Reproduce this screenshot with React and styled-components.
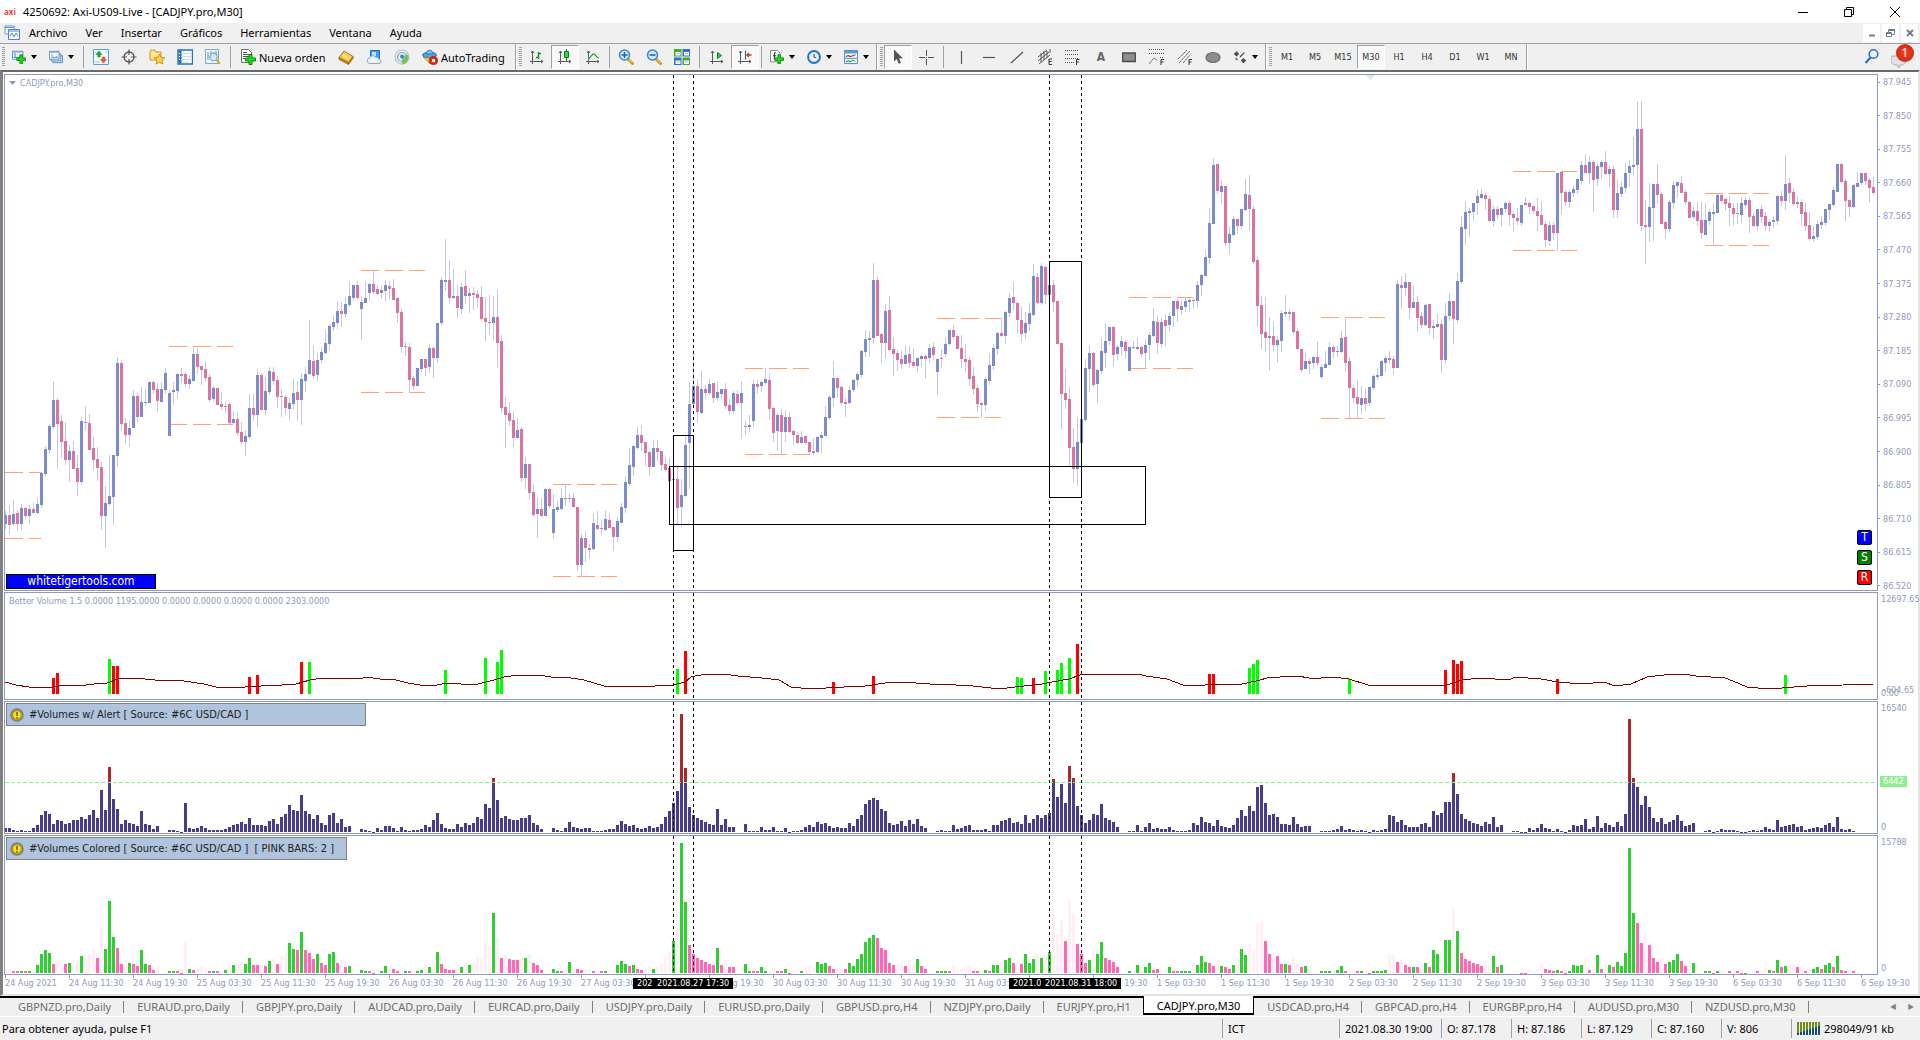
import React from "react";
import styled, { createGlobalStyle, css } from "styled-components";

const UI = `"Noto Sans", "Open Sans", sans-serif`;
const SMALL = `"DejaVu Sans Condensed", "DejaVu Sans", sans-serif`;
const INK = "#8f9abd";

const GlobalStyle = createGlobalStyle`
  * { box-sizing: border-box; }
  body { margin: 0; background: #f0f0f0; font-family: ${UI}; font-size: 11px; color: #000; }
  button { font: inherit; color: inherit; background: none; border: 0; padding: 0; margin: 0; }
  svg { display: block; }
`;

/* ---------- market data ---------- */

// One candle per entry: direction, high, body top, body bottom, low (three steps per pixel).
const SEGMENTS = [
  {
    top: 125,
    data: `u 933 945 972 987,d 918 945 975 1002,u 900 942 972 975,d 930 939 972 993,u 912 924 972 990,d 921 924 948 957,u 915 927 948 972,d 909 927 939 942,u 894 912 939 942,u 816 819 915 924,u 738 747 822 828,u 672 678 750 762,u 543 600 681 687,d 594 600 672 807,d 645 663 726 774,d 666 723 780 795,u 735 753 780 846,d 723 753 807 807,d 765 804 846 888,u 651 663 846 852,d 618 666 669 690,d 642 669 750 750,d 708 744 780 810,d 741 777 804 843,d 786 801 948 990,u 858 909 948 1044,u 765 888 912 918,u 765 765 891 975,u 471 489 768 801,d 480 489 672 690,d 654 669 705 732,u 660 684 705 741,u 570 588 684 684,d 579 588 651 666,u 561 606 651 651,u 567 606 609 618,u 543 546 609 609,d 543 546 570 582,d 549 567 603 636,u 546 567 606 606,u 504 519 570 582,u 570 579 708 708,u 546 570 576 615,u 519 522 573 594,d 504 522 528 549,d 516 522 552 561,u 525 537 552 567,u 438 462 543 543,d 444 462 501 522,d 498 498 510 555,d 483 507 534 543,d 522 531 600 606,u 558 564 597 603,d 564 564 615 615,d 576 612 621 630,d 606 618 621 639,d 609 612 669 675,u 633 657 669 672,d 636 657 699 708,d 666 696 726 735,u 690 708 726 768,u 582 624 711 717,d 579 624 645 663,u 507 525 645 681,d 519 525 630 630,u 531 573 630 645,u 501 513 576 585,d 501 516 543 555,d 528 540 591 624,d 567 588 591 651,d 585 591 624 642,u 594 609 627 663,u 537 579 612 627,d 543 576 600 663,u 519 537 600 675,u 501 522 543 576,u 360 480 522 525,d 438 483 528 534,u 459 480 525 543,u 441 456 480 489,u 390 429 459 462,u 372 378 432 450,u 348 366 381 393,u 306 333 369 387,d 306 333 342 381,u 291 312 342 354,u 243 288 315 321,u 255 255 294 303,d 243 255 294 297,u 288 306 327 420,u 243 294 309 309,u 249 252 279 303,d 210 252 276 282,d 255 267 282 285,u 258 270 279 297,u 240 255 273 303,d 243 258 267 297,d 237 264 300 300,d 291 294 339 369,d 327 336 441 459,d 426 438 441 468,d 429 441 540 579,d 528 534 558 570,u 504 504 558 558,u 477 477 507 516,d 477 477 504 528,u 432 444 501 519,d 438 444 474 534,u 369 369 474 489,u 231 240 369 375,u 117 240 246 273,d 180 240 294 309,u 204 288 294 297,d 258 288 324 354,u 249 261 327 342,d 210 258 288 312,u 264 279 288 339,d 261 279 285 330,d 270 282 294 324,d 258 291 357 363,d 291 354 366 423,d 285 366 369 402,u 288 351 369 420,d 270 351 429 504,d 405 423 624 639,d 591 621 645 744,d 606 639 663 678,d 633 660 714 741,u 654 690 714 717,d 681 687 834 846,u 771 792 834 867,d 792 792 879 900,d 852 876 945 948,u 891 927 942 1014,d 894 927 948 951,u 864 867 948 948,d 864 867 918 924,u 882 927 999 1017,u 900 921 930 936,u 864 894 927 930,d 852 894 897 918,d 882 894 897 906,d 879 894 921 921,d 921 921 1095 1113,u 1002 1014 1095 1131,d 993 1014 1044 1086,d 1032 1044 1050 1077,u 942 969 1047 1050,d 933 975 987 990,d 960 984 987 1002,u 930 957 990 993,d 942 960 984 987,d 981 981 1011 1053,u 951 963 1011 1026,u 909 921 969 969,u 828 846 924 939,u 744 795 852 858,u 735 738 801 828,u 681 705 744 750`,
  },
  {
    top: 155,
    data: `d 585 615 639 663,d 636 636 669 708,d 663 666 711 738,u 630 654 711 711,d 630 654 666 693,d 663 663 705 723,d 681 702 720 726,d 684 714 753 753,u 744 747 750 750,d 711 747 834 882,u 747 795 831 891,u 612 645 798 801,u 456 522 639 777,u 360 468 522 525,d 447 468 546 576,u 423 477 549 552,d 465 477 489 507,u 447 462 489 495,d 459 459 504 519,u 456 486 504 513,u 477 477 492 507,d 459 477 528 537,d 507 525 543 555,u 483 489 543 552,d 480 492 519 525,u 453 489 519 627,d 573 588 591 615,u 555 585 591 606,u 450 462 573 591,d 450 462 471 492,u 450 456 468 486,u 414 447 459 465,d 429 450 537 570,d 531 534 609 636,u 549 555 603 663,d 537 555 606 675,u 540 561 606 636,d 546 561 606 609,d 600 603 615 645,d 606 615 639 642,u 603 621 639 642,d 618 618 639 645,d 636 636 666 675,d 624 663 669 675,u 618 621 666 669,u 606 615 624 669,u 528 561 618 618,u 495 501 564 570,u 393 444 504 531,d 444 444 474 504,d 468 471 519 528,d 504 516 522 561,u 468 480 519 522,u 447 450 480 486,u 429 432 450 471,u 360 363 435 444,u 300 327 366 381,u 303 324 330 381,u 99 150 324 342,d 138 150 318 318,d 309 312 339 399,u 222 243 339 384,d 198 240 360 363,d 321 357 372 438,d 360 369 390 423,d 363 387 402 417,u 345 375 402 402,d 348 372 399 414,d 354 396 408 414,u 381 384 408 426,u 372 378 387 411,d 372 378 387 447,u 342 354 384 399,d 336 351 375 390,u 384 387 426 495,d 357 384 387 414,u 324 342 372 381,u 300 300 342 348,d 285 300 321 327,d 315 318 357 357,d 315 354 387 414,d 342 387 396 426,d 381 390 447 468,d 411 438 477 495,d 465 474 522 546,d 516 519 525 564,u 441 447 525 543,u 369 405 453 465,u 342 354 408 420,u 306 309 357 375,d 264 309 318 321,u 243 246 318 342,u 189 204 249 261,d 156 201 219 240,d 216 219 270 309,d 231 270 312 336,u 246 279 309 327,u 219 249 282 303,u 102 138 255 258,d 129 141 219 222,u 99 108 219 225,d 108 111 195 222,u 165 165 195 195,d 150 165 216 246,d 213 213 342 342,d 339 339 492 597,d 417 489 510 537,d 471 507 654 711,d 594 651 717 759,u 561 636 717 768,u 567 567 639 639,u 387 414 570 576,u 348 369 417 486,d 366 369 465 471,u 417 420 462 519,u 324 363 423 432,u 279 333 369 414,u 291 291 333 345,d 288 291 375 408,u 345 351 372 390,u 318 333 351 378,d 330 336 363 387,u 351 351 423 423,d 333 351 354 357,u 324 351 357 360,d 348 351 372 381,u 327 345 369 417,u 306 315 345 390,u 234 273 318 321,d 255 276 339 372,u 264 276 342 354,d 252 270 288 348,u 246 258 285 306,u 213 213 258 291,d 207 213 237 276,u 210 228 240 255,u 201 213 231 246,u 201 210 216 246,d 204 210 213 237,u 153 165 213 234,u 132 135 165 198,u 60 81 138 138`,
  },
  {
    top: 15,
    data: `u 354 399 504 522,u 204 225 402 402,d 222 222 303 312,u 270 288 306 342,d 288 288 459 468,u 411 432 459 492,u 378 387 435 438,d 387 387 408 429,u 357 357 408 417,u 267 312 360 363,d 255 315 357 420,d 348 357 516 522,d 501 510 648 708,d 618 645 732 777,d 621 726 744 786,u 681 738 744 843,d 696 738 765 783,u 738 750 765 819,u 660 669 753 786,u 615 666 672 681,d 657 666 672 693,d 666 666 726 735,d 717 723 777 783,d 777 777 840 846,u 786 813 837 837,d 804 813 822 852,u 798 801 819 837,d 753 801 819 828,u 822 831 861 867,u 783 822 834 834,u 756 771 825 825,d 765 771 786 804,u 768 783 786 801,u 723 744 786 789,d 681 741 819 846,d 801 813 894 984,d 885 894 924 939,d 870 921 942 984,u 888 924 945 972,d 894 924 942 963,u 891 891 939 948,u 852 858 894 900,u 834 855 861 870,u 810 813 858 858,u 795 804 819 846,d 783 804 810 822,d 798 807 834 855,u 570 582 834 834,d 558 585 594 657,u 549 576 594 618,d 576 576 654 684,u 588 636 654 654,d 618 636 684 726,d 666 678 705 714,u 642 645 705 708,d 642 642 714 732,u 690 708 714 747,u 672 702 711 714,d 687 702 810 849,u 639 678 810 822,u 609 633 678 693,d 633 633 687 762,u 549 573 690 699,u 378 411 576 582,u 336 366 417 465,u 354 363 369 441,u 339 339 366 393,u 297 318 339 375,u 297 312 324 327,d 306 315 327 360,d 318 327 393 396,u 348 357 393 411,d 348 357 375 387,u 354 354 375 411,u 333 339 357 369,d 330 339 375 408,d 366 372 384 426,d 354 384 393 405,u 345 345 399 408,u 321 339 345 345,d 333 339 351 372,d 348 348 363 372,d 324 363 378 423,d 336 375 405 405,d 393 402 450 471,u 396 405 453 468,d 396 405 429 450,u 249 249 429 483,d 246 246 309 372,d 300 306 336 348,u 300 306 336 354,u 288 297 309 321,u 264 267 300 312,u 213 225 273 285,d 192 225 249 249,u 198 216 249 282,d 210 216 270 366,u 219 228 267 288,u 210 216 231 267,d 183 216 252 255,u 228 237 252 291,d 228 237 360 384,u 270 309 360 384,u 276 291 312 321,u 219 249 294 309,u 210 228 249 291,u 141 225 231 255,u 33 117 225 402,d 33 117 408 423,d 330 405 411 522,u 279 351 411 456,u 282 282 354 453,d 222 282 315 342,d 306 312 402 402,d 393 396 417 444,u 330 336 417 426,u 273 285 339 357,u 276 276 288 324,d 258 279 309 309,d 300 306 336 345,d 333 336 384 384,u 351 363 381 387,d 336 363 393 408,d 333 390 429 447,u 339 390 435 435,u 357 366 393 405,u 339 366 372 465,u 312 315 369 369,d 309 315 333 339,d 324 327 342 363,d 318 339 354 408,d 339 354 372 405,d 339 369 372 402,u 321 339 375 399,u 321 330 345 357,d 321 330 381 429,d 369 378 408 411,u 357 357 408 423,d 345 357 381 399,d 366 378 408 423,u 387 396 408 426,u 378 390 396 414,u 315 318 393 405,d 303 318 333 348,u 195 282 333 360,d 264 279 309 339,d 294 306 342 348,u 318 336 342 354,d 327 336 372 405,d 339 366 408 423,d 366 405 447 453,u 408 438 447 456,u 390 402 441 450,u 378 396 405 417,u 357 357 399 408,u 342 342 360 390,u 291 300 345 351,u 222 222 306 306,d 219 222 276 279,d 267 273 333 393,d 330 330 351 381,u 282 285 351 354,u 246 279 291 291,u 249 249 279 285,d 249 249 273 285,d 264 270 294 339,d 261 291 309 315`,
  },
];

const CANDLES = SEGMENTS.flatMap(({ top, data }) =>
  data.split(",").map((row) => {
    const [dir, ...v] = row.split(" ");
    const [high, open, close, low] = v.map((n) => top + Math.round(Number(n) / 3));
    return { dir, high, open, close, low };
  })
);

// Volume bars: size followed by tone (G rising, P falling, L neutral). Zero means no bar.
const VOLUMES = `4L 4L 2P 1P 2G 1P 1G 4L 7G 17G 21G 18G 8P 12L 11L 8P 9G 12L 12L 15G 13L 17L 22L 14P 42L 22G 65G 33G 23P 8P 12L 9G 8P 6P 21G 8G 7P 3P 6L 0 0 2G 2G 1P -1P 29L 4G 3P 4L 6L 4L 2P 2G 2P 2L 3G 5L 7G 8L 10L 8G 14G 7P 7P 7L 6P 11G 13L 8P 15L 18L 27G 22G 21P 37G 21P 18P 13P 17G 9P 7P 17G 19G 9P 13L 5P 6G 0 0 3G 2G 1P -1P 4L 2G 6G 6L 4P 1P 5L 2G 1P 2L 2G 3G 7L 5G 12L 19G 8P 4P 3P 3P 8L 5G 9L 7G 9L 15L 13L 28L 24L 54G 32L 14P 16L 13P 12P 12P 14L 14G 17L 9P 7P 3P 0 0 4G 2G 1P 4L 10G 5L 4P 3P 4L 4L 1P 1L 1P 2G 3L 3L 7G 11G 8G 6P 7G 4P
3P 4L 6L 4G 5L 8L 15L 21L 29G 41L 118G 64G 25P 17P 14P 12P 10P 8P 7P 23G 7P 13L 5P 5P 0 0 8G 1G 1P 1P 5G 2G 2L 5L 1P 1P 4G -1P 1L 1L 2G 5L 7L 5L 10G 8G 9G 6P 4P 5L 4L 4P 9G 6G 13G 17G 28G 32G 34G 32P 23P 21P 9P 7P 8L 11L 6P 12L 8L 13G 6P 4P 0 0 1G 2G 1G 1P 7L 3L 4L 6L 7L 2P 2P 2L 3G 1P 7G 7G 11L 12G 14G 9P 10L 8P 17G 9G 13G 17L 14G 17L 19G 53L 35L 48L 29P 66L 54L 26P 17P 9P 12G 18L 17G 28G 14P 12P 10P 5P 0 0 1G 1L 7G 1L 5G 9G 3P 4P 3L 3L 5G 2P 1P 1G 1G 2G 9L 7G 15G 10G 9P 6P 12L 6G 5P 4P 7G 14L 22G 16G 26L 21L 45L 47L 29P 17P 18L 15P
8P 8G 7P 15L 8L 5P 6G 6L 0 0 1G 1G 1G 2L 3G 6G 2P 3L 2L 1P 2G 1L -1P 2G 1G 2G 3G 17L 16L 10P 12L 7P 5P 5G 5P 8L 9G 5P 21G 17G 19L 30G 30G 59L 38G 18P 13P 11P 9P 8P 6P 10L 8L 15G 5P 7G 0 0 1L 1L -1P -1P 4L 2L 4L 8L 4P 3P 1P 3G 1P -1P 2G 7G 6G 7G 13L 3P 5L 16G 4P 9L 7G 5P 10G 6G 18G 113G 54G 45P 27P 36L 25P 14P 10P 14L 8P 10G 12G 17G 11P 6P 7L 9G 0 0 1G 2G -1P 1G 3L 2L 2P 2L 1P -1P -1G 1L 2L 1P 2L 5L 3G 2P 12G 5P 6G 7L 8L 5P 6L 2P 3L 4G 5G 4P 7G 9G 5P 15G 3P 2P 3L 1P`
  .split(/\s+/)
  .map((v) => ({ size: parseInt(v, 10), tone: v.slice(-1) }));

const TONES = { G: "#32cd32", P: "#ff69b4", L: "#fff0f5" };

// Highlighted bars of the first indicator: index, colour, height.
const CLIMAX = `12r16 13r21 26g35 27r28 28r28 61r17 63r19 74r32 76g32 110g24 120g36 123g32 124g44 168g25 170r43 207r12 217r18 253g17 254g16 257r16 260g23 263g24 264g31 266g36 268r50 301r20 302r20 311g26 312g30 313g34 336g15 360r24 362r34 363r30 364r33 388r15 445g19`
  .split(" ")
  .map((v) => v.match(/(\d+)([rg])(\d+)/).slice(1));

const AVERAGE = `5,682 16,685 29,687 53,687 65,685 78,686 94,684 107,683 118,679 135,678 155,680 184,681 204,684 216,687 245,687 261,686 282,685 296,684 310,680 322,678 347,678 361,679 365,677 380,679 396,680 408,683 420,685 437,685 447,683 459,683 463,685 478,684 494,680 504,677 518,675 539,675 551,677 571,678 584,680 604,686 620,687 640,686 655,686 673,685 685,682 691,677 695,676 707,674 724,674 738,676 762,678 779,680 791,687 801,688 826,688 844,687 865,686 885,683 901,682 930,684 956,685 973,686 991,688 1007,688 1024,686 1042,684 1052,682 1069,679 1083,674 1120,674 1130,675 1138,674 1146,676 1167,679 1183,685 1205,685 1226,684 1242,684 1256,681 1271,677 1280,677 1298,676 1309,678 1321,678 1333,677 1349,679 1368,685 1386,686 1413,685 1421,686 1447,685 1462,680 1480,678 1509,680 1515,677 1541,679 1558,682 1582,684 1604,682 1615,686 1631,684 1647,677 1664,675 1684,674 1696,676 1725,678 1733,681 1747,687 1758,688 1782,688 1807,686 1843,685 1873,684`;

// Session ranges: first candle, high, low.
const SESSIONS = [
  [41, 346, 424], [89, 270, 392], [137, 484, 576], [185, 368, 454], [233, 318, 417],
  [281, 297, 368], [329, 317, 418], [377, 171, 250], [425, 193, 245],
];

const GUIDES = [167, 172, 261, 269];
const STEP = 4;

/* ---------- window chrome ---------- */

const Window = styled.div`
  display: flex;
  flex-direction: column;
  height: 100vh;
  overflow: hidden;
  background: #f0f0f0;
`;

const TitleBar = styled.header`
  display: flex;
  align-items: center;
  height: 23px;
  padding: 0 2px 0 4px;
  background: #fff;
`;
const Brand = styled.span`
  width: 19px;
  font: bold 8px/12px "Open Sans", sans-serif;
  color: #f0404c;
`;
const Title = styled.h1`
  flex: 1;
  margin: 0;
  font: 11px/16px ${UI};
`;
const WindowButton = styled.button`
  display: grid;
  place-items: center;
  width: 46px;
  height: 22px;
`;

const MenuBar = styled.nav`
  display: flex;
  align-items: center;
  height: 20px;
  padding-left: 4px;
  font-size: 11px;
`;
const MenuItems = styled.div`
  display: flex;
  flex: 1;
`;
const MenuButton = styled.button`
  padding: 0 9px;
  line-height: 18px;
`;
const MdiButton = styled.button`
  display: grid;
  place-items: center;
  width: 17px;
  height: 18px;
  margin-right: 2px;
  background: #fff;
  color: #6b7f94;
`;

const Toolbar = styled.div`
  display: flex;
  height: 27px;
  border-top: 1px solid #a0a0a0;
  background: #f0f0f0;
`;
const Group = styled.div`
  display: flex;
  align-items: center;
  padding-right: 1px;
  border-right: 1px solid #a0a0a0;
  box-shadow: 1px 0 #fff;
  margin-right: 1px;
`;
const Handle = styled.span`
  width: 3px;
  height: 20px;
  margin: 0 1px 0 2px;
  background: repeating-linear-gradient(#a0a0a0 0 1px, #f0f0f0 1px 2px);
`;
const Divider = styled.span`
  width: 1px;
  height: 22px;
  margin: 0 ${(p) => (p.$tight ? 2 : 3)}px;
  background: #a0a0a0;
`;
const ToolButton = styled.button`
  display: flex;
  align-items: center;
  justify-content: ${(p) => (p.$drop || p.$wide ? "flex-start" : "center")};
  gap: ${(p) => (p.$wide ? 3 : 5)}px;
  width: ${(p) => (p.$wide ? 98 : p.$drop ? 37 : 28)}px;
  height: 24px;
  padding: 0 ${(p) => (p.$drop || p.$wide ? 6 : 0)}px;
  white-space: nowrap;
  ${(p) =>
    p.$wide &&
    css`
      padding-right: 0;
    `}
  ${(p) =>
    p.$drop &&
    css`
      &::after {
        content: "";
        border: 3px solid transparent;
        border-top: 4px solid #000;
        border-bottom: 0;
      }
    `}
  ${(p) =>
    p.$small &&
    css`
      font: 9px/12px ${SMALL};
      color: #333;
    `}
  ${(p) =>
    p.$pressed &&
    css`
      background: #f9f9f9;
      border: 1px solid #fff;
      border-top-color: #a0a0a0;
      border-left-color: #a0a0a0;
    `}
`;
const Spacer = styled.span`
  flex: 1;
`;
const Alerts = styled.button`
  position: relative;
  display: flex;
  align-items: flex-end;
  width: 30px;
  height: 24px;
  padding-left: 5px;
  margin-right: 4px;
`;
const AlertCount = styled.span`
  position: absolute;
  top: 0;
  right: 2px;
  width: 18px;
  height: 18px;
  border-radius: 9px;
  background: radial-gradient(#f0452c, #c81e0a);
  color: #fff;
  font: 12px/17px ${UI};
  text-align: center;
`;

/* ---------- chart ---------- */

const ChartFrame = styled.main`
  display: flex;
  flex: 1;
  flex-direction: column;
  gap: 1px;
  min-height: 0;
  padding: 2px 0 0 1px;
  border-top: 2px solid #696969;
  border-left: 3px solid #808080;
  border-right: 2px solid #e3e3e3;
  border-bottom: 2px solid #e3e3e3;
  background: #fff;
  color: ${INK};
  font: 9px/12px ${SMALL};
`;
const Pane = styled.section`
  display: flex;
  flex: ${(p) => (p.$height ? `0 0 ${p.$height}px` : "1")};
  min-height: 0;
`;
const Plot = styled.div`
  position: relative;
  flex: 1;
  min-width: 0;
  overflow: hidden;
  border: 1px solid ${INK};
`;
const Canvas = styled.svg`
  width: 100%;
  height: 100%;
  shape-rendering: crispEdges;
`;
const Axis = styled.div`
  position: relative;
  display: flex;
  flex-direction: column;
  justify-content: space-between;
  width: 40px;
  padding: 1px 0 1px 3px;
  line-height: 12px;
  white-space: nowrap;
`;
const PriceAxis = styled(Axis)`
  padding: 3px 0 0 0;
  line-height: 10px;
`;
const Price = styled.span`
  display: flex;
  align-items: center;
  gap: 3px;
  &::before {
    content: "";
    width: 2px;
    height: 1px;
    background: ${INK};
  }
`;
const Overlap = styled.span`
  display: grid;
  span {
    grid-area: 1 / 1;
  }
  span + span {
    padding-left: 2px;
    margin-top: -3px;
  }
`;
const LevelTag = styled.span`
  position: absolute;
  top: 75px;
  left: 2px;
  width: 27px;
  padding-left: 3px;
  background: #90ee90;
  color: #fff;
  line-height: 11px;
`;
const Caption = styled.div`
  position: absolute;
  top: 2px;
  left: 4px;
  display: flex;
  align-items: center;
  gap: 4px;
`;
const Source = styled.div`
  position: absolute;
  top: 1px;
  left: 1px;
  display: flex;
  align-items: center;
  gap: 5px;
  width: ${(p) => p.$width}px;
  height: 23px;
  padding-left: 3px;
  border: 1px solid #808080;
  background: #b0c4de;
  color: #222;
  font: 11px/20px ${SMALL};
  white-space: pre;
`;
const Site = styled.a`
  position: absolute;
  left: 1px;
  bottom: 1px;
  width: 150px;
  border: 1px solid #000;
  background: #00f;
  color: #fff;
  font: 12px/13px ${SMALL};
  text-align: center;
  text-decoration: none;
`;
const Switches = styled.div`
  position: absolute;
  right: 5px;
  bottom: 5px;
  display: flex;
  flex-direction: column;
  gap: 5px;
`;
const Switch = styled.button`
  width: 15px;
  height: 15px;
  border: 1px solid #000;
  border-radius: 2px;
  background: ${(p) => p.$tone};
  color: #fff;
  font: 12px/13px ${SMALL};
`;
const TimeAxis = styled.div`
  position: relative;
  display: flex;
  flex: 0 0 19px;
  margin-top: -1px;
  padding-left: 1px;
  overflow: hidden;
`;
const Time = styled.time`
  flex: 0 0 64px;
  white-space: nowrap;
  line-height: 11px;
  &::before {
    content: "";
    display: block;
    width: 1px;
    height: 3px;
    background: ${INK};
  }
`;
const TimeTag = styled.time`
  position: absolute;
  top: 3px;
  left: ${(p) => p.$index * STEP - 39}px;
  width: ${(p) => (p.$next ? (p.$next - p.$index) * STEP : 80)}px;
  padding-left: 4px;
  background: #000;
  color: #fff;
  line-height: 11px;
  white-space: nowrap;
`;

/* ---------- bottom bars ---------- */

const Tabs = styled.nav`
  display: flex;
  flex: 0 0 21px;
  padding-left: 5px;
  border-top: 2px solid #000;
  border-bottom: 1px solid #fff;
  color: #6d6d6d;
`;
const Tab = styled.button`
  position: relative;
  height: 17px;
  padding: 0 13px;
  line-height: 16px;
  white-space: nowrap;
  &::after {
    content: "";
    position: absolute;
    right: 0;
    top: 3px;
    height: 12px;
    border-right: 1px solid #808080;
  }
  ${(p) =>
    p.$active &&
    css`
      height: 19px;
      margin: -2px 0 0 -1px;
      padding: 2px 13px 0;
      border: 1px solid #000;
      border-top: 0;
      border-bottom-width: 2px;
      background: #fff;
      color: #000;
      &::after {
        display: none;
      }
    `}
`;
const TabScroll = styled.button`
  width: 18px;
  color: #808080;
  font: 8px/16px ${SMALL};
`;
const StatusBar = styled.footer`
  display: flex;
  align-items: center;
  flex: 0 0 23px;
`;
const Cell = styled.span`
  display: flex;
  align-items: center;
  gap: 4px;
  flex: ${(p) => (p.$width ? `0 0 ${p.$width}px` : "1")};
  height: 19px;
  padding-left: ${(p) => (p.$width ? 5 : 2)}px;
  border-left: ${(p) => (p.$width ? "1px solid #a0a0a0" : "0")};
  white-space: nowrap;
`;

/* ---------- icons ---------- */

const Icon = ({ children, size = 16 }) => (
  <svg width={size} height={size} viewBox="0 0 16 16" fill="none" aria-hidden="true">
    {children}
  </svg>
);
const Plus = ({ x = 5, y = 5 }) => (
  <path
    transform={`translate(${x} ${y})`}
    d="M4 .5h3V4h3.500v3H7v3.500H4V7H.5V4H4z"
    fill="#1fd81f"
    stroke="#0a8a0a"
  />
);
const Axes = () => (
  <path d="M3.500 2v13M1 12.500h13M2 4l1.500-2L5 4M12 11l2 1.500-2 1.500" stroke="#5a5a5a" />
);
const Lens = ({ children }) => (
  <>
    <path d="M10 10l4.500 4.500" stroke="#c89b28" strokeWidth="3" strokeLinecap="round" />
    <path d="M10.500 10l4 4" stroke="#f6d65c" strokeWidth="1" />
    <circle cx="6.500" cy="6" r="5" fill="#cfe8fb" stroke="#3f87c9" strokeWidth="1.500" />
    {children}
  </>
);

const icons = {
  newChart: (
    <>
      <path d="M.5 1.500h12v9H.5z" fill="#eef6fd" stroke="#4d86b8" />
      <path d="M1 2.500h11" stroke="#7fb0dc" />
      <path d="M3.500 4v5M2 8.500h8M2.500 5l1-1 1 1" stroke="#4d86b8" />
      <Plus />
    </>
  ),
  profiles: (
    <>
      <path d="M4.500 6.500h11v8h-11z" fill="#d8eaf9" stroke="#4d86b8" />
      <path d="M2.500 4.500h11v8h-11z" fill="#e5f1fb" stroke="#4d86b8" />
      <path d="M.5 1.500h11v9H.5z" fill="#f4f9fe" stroke="#4d86b8" />
      <path d="M1 2.500h10M3.500 4v5M3 8.500h7M8 7l2 1.500" stroke="#6ca0cd" />
    </>
  ),
  market: (
    <>
      <path d="M.5.5h15v15H.5z" fill="#f5faff" stroke="#5b9bd5" />
      <path d="M2 3h2M2 13h5M12 3h2" stroke="#9ac3e6" />
      <path d="M6 2l3 3.500H7.200V8H4.800V5.500H3z" fill="#1fae2b" stroke="#0b7a18" strokeWidth=".5" />
      <path d="M10.500 14l3-3.500h-1.800V8H9.300v2.500H7.500z" fill="#f05a3c" stroke="#b32a12" strokeWidth=".5" />
    </>
  ),
  cross: (
    <>
      <circle cx="8" cy="8" r="5" stroke="#555" strokeWidth="1.300" />
      <path d="M8 .5V6M8 10v5.500M.5 8H6M10 8h5.500" stroke="#555" strokeWidth="1.200" />
    </>
  ),
  navigator: (
    <>
      <path d="M1 3l1-2h4l1 2h5v8H1z" fill="#fbe38a" stroke="#c79a24" />
      <path d="M2 5h9" stroke="#fff3bf" />
      <path d="M10.500 5l1.700 3.400 3.600.5-2.600 2.500.7 3.700-3.400-1.800-3.300 1.800.7-3.700L5.200 8.900l3.600-.5z" fill="#fdd335" stroke="#b9820f" strokeWidth=".8" />
    </>
  ),
  terminal: (
    <>
      <path d="M1 1h14.500v14H1z" fill="#f5faff" stroke="#2d6fb5" strokeWidth="1.400" />
      <path d="M1.500 1.500h3v13h-3z" fill="#2d6fb5" />
      <path d="M6 4.500h8M6 7.500h8M6 10.500h8M6 13h5" stroke="#c7daec" />
      <path d="M2 4.500h1M2 7.500h1M2 10.500h1" stroke="#fff" />
    </>
  ),
  tester: (
    <>
      <path d="M.5.5h13v14H.5z" fill="#eef5fb" stroke="#7ea9cf" />
      <path d="M3 3v8M6 2v7M9 3v5M11 2v5" stroke="#6c8fae" />
      <circle cx="8.500" cy="8" r="3.800" fill="#d4ebfb" fillOpacity=".8" stroke="#6a9cc4" />
      <path d="M11.500 11l3.500 3.800" stroke="#d8a62c" strokeWidth="2" />
    </>
  ),
  order: (
    <>
      <path d="M1.500.5h7l3 3v10h-10z" fill="#fff" stroke="#6b6b6b" />
      <path d="M3 3.500h4M3 5.500h6M3 7.500h6M3 9.500h3" stroke="#555" />
      <Plus />
    </>
  ),
  book: (
    <>
      <path d="M1 8.500L6 2l9 5.500-4.500 6z" fill="#f3cf5a" stroke="#a87a12" />
      <path d="M1 8.500v2l9.500 5v-2zM10.500 15.500l4.500-6v-2l-4.500 6z" fill="#c48f1e" stroke="#8c650d" strokeWidth=".7" />
      <path d="M5 6l5 3" stroke="#fff2ba" />
    </>
  ),
  cloud: (
    <>
      <path d="M4.500 1.500h9v8h-9z" fill="#3e9ff0" stroke="#1d6fc0" />
      <path d="M6 3h4v4H6z" fill="#bfe0ff" />
      <path d="M3.500 14.500a2.800 2.800 0 010-5.500 3.500 3.500 0 016-1 3 3 0 013.500 2.500 2 2 0 010 4z" fill="#eef3fa" stroke="#8fa3c2" />
    </>
  ),
  signal: (
    <>
      <circle cx="8" cy="8" r="7" stroke="#b4c4cf" strokeWidth="1.200" />
      <circle cx="8" cy="8" r="4.500" stroke="#7aa7bd" strokeWidth="1.200" />
      <path d="M8 8v7.500A7 7 0 0013.500 5z" fill="#61bb3b" fillOpacity=".75" />
      <circle cx="8" cy="7.500" r="2" fill="#3b8ad0" />
    </>
  ),
  auto: (
    <>
      <path d="M1 8l7 7 5-3 1-6z" fill="#f3cb45" stroke="#b98b16" strokeWidth=".7" />
      <ellipse cx="7.500" cy="6" rx="7" ry="2.800" fill="#56a6d8" stroke="#2e79ad" />
      <path d="M4 5c0-5 7-5 7 0z" fill="#7fc1ea" stroke="#2e79ad" />
      <circle cx="11.500" cy="11.500" r="4.300" fill="#dc2b1c" stroke="#a01208" strokeWidth=".6" />
      <path d="M10 10h3v3h-3z" fill="#fff" />
    </>
  ),
  bars: (
    <>
      <Axes />
      <path d="M9.500 3v7M7 8.500h2.500M9.500 4.500H12" stroke="#12952a" strokeWidth="1.500" />
    </>
  ),
  candles: (
    <>
      <Axes />
      <path d="M9.500 0v12" stroke="#0c7a1d" />
      <path d="M7.500 2.500h4v6h-4z" fill="#2fdb43" stroke="#0c7a1d" />
    </>
  ),
  line: (
    <>
      <Axes />
      <path d="M3 10c3-1 4-6 6-5s3 4 5 4" stroke="#2e9b40" strokeWidth="1.200" />
    </>
  ),
  zoomIn: <Lens><path d="M3.500 6h6M6.500 3v6" stroke="#2565a8" strokeWidth="1.600" /></Lens>,
  zoomOut: <Lens><path d="M3.500 6h6" stroke="#2565a8" strokeWidth="1.600" /></Lens>,
  tile: (
    <>
      <path d="M0 0h7.500v7.500H0z" fill="#4ba82e" />
      <path d="M8.500 0H16v7.500H8.500z" fill="#2f6fd0" />
      <path d="M0 8.500h7.500V16H0z" fill="#2f6fd0" />
      <path d="M8.500 8.500H16V16H8.500z" fill="#4ba82e" />
      <path d="M1.500 3h5v3.500h-5zM10 3h5v3.500h-5zM1.500 11.500h5V15h-5zM10 11.500h5V15h-5z" fill="#fff" />
      <path d="M2.500 4.500h3M11 4.500h3M2.500 13h3M11 13h3" stroke="#9fb6d8" />
    </>
  ),
  scroll: (
    <>
      <Axes />
      <path d="M8.500 3.500l4 3-4 3z" fill="#35d14a" stroke="#0c7a1d" />
    </>
  ),
  shift: (
    <>
      <Axes />
      <path d="M8.500 1.500v9" stroke="#3a64a8" strokeWidth="1.200" />
      <path d="M14.500 6H10M12 4L10 6l2 2" stroke="#c03d16" strokeWidth="1.400" />
    </>
  ),
  indicators: (
    <>
      <path d="M.5.5h8l3 3v10H.5z" fill="#fff" stroke="#777" />
      <path d="M7 3.500c-2-1-2 0-2 2V11M3.500 6.500h3.500" stroke="#333" strokeWidth="1.200" />
      <Plus />
    </>
  ),
  clock: (
    <>
      <circle cx="8" cy="8" r="6.800" fill="#f4f9fe" stroke="#2272d0" strokeWidth="2.200" />
      <circle cx="8" cy="8" r="5.200" stroke="#a9cdf0" />
      <path d="M8 4.500V8l2.500 1" stroke="#333" strokeWidth="1.200" />
    </>
  ),
  template: (
    <>
      <path d="M.5.5h15v15H.5z" fill="#f5faff" stroke="#3c7cc0" />
      <path d="M1 1h14v3H1z" fill="#5b9bdb" />
      <path d="M1 9.500h14" stroke="#3c7cc0" />
      <path d="M2 7.500l3-1 2 1 3-1 3-1" stroke="#a03b1e" strokeWidth="1.200" />
      <path d="M2 13.500l3-1 2 1 3-2 3 1.500" stroke="#2f9b3b" strokeWidth="1.200" />
    </>
  ),
  cursor: <path d="M4 .5v12l2.800-2.500 1.900 4.700 2.300-1-2-4.500h3.800z" fill="#555" />,
  plusThin: <path d="M8.500 1v6M8.500 10v6M1 8.500h6M10 8.500h6M8 8.500h1" stroke="#555" />,
  vline: <path d="M8.500 2v13" stroke="#555" strokeWidth="1.200" />,
  hline: <path d="M2 8.500h12" stroke="#555" strokeWidth="1.200" />,
  trend: <path d="M2 14L14 3" stroke="#555" strokeWidth="1.200" />,
  channel: (
    <>
      <path d="M1 8l9-7M1 12l11-9M2 15L13 6M4 4v9M7 2v9M10 2v7M13 0v4" stroke="#555" />
      <path d="M15 10h-3v5.500h3M12 12.500h2.500" stroke="#333" />
    </>
  ),
  fibo: (
    <>
      <path d="M0 1.500h13M0 5.500h13M0 9.500h13M0 13.500h9" stroke="#555" strokeDasharray="1 1" />
      <path d="M14.500 10.500H11.500V16M11.500 13h2.500" stroke="#333" />
    </>
  ),
  rect: <path d="M1.700 4h12.600v8.500H1.700z" fill="#8d8d8d" stroke="#4a4a4a" strokeWidth="1.300" />,
  fiboTime: (
    <>
      <path d="M0 .5h15M0 4.500h15M11 8.500h4" stroke="#555" strokeDasharray="1 1" />
      <path d="M0 15l5-6 3 2" stroke="#777" />
      <path d="M15 10.500h-3V16M12 13h2.500" stroke="#333" />
    </>
  ),
  fork: (
    <>
      <path d="M1 10l9-9M2 14L13 2M6 14l7-8" stroke="#666" strokeDasharray="3 .5" />
      <path d="M15 10.500h-3V16M12 13h2.500" stroke="#333" />
    </>
  ),
  ellipse: <ellipse cx="8" cy="8.500" rx="7" ry="5" fill="#8d8d8d" stroke="#6a6a6a" strokeWidth="1.200" />,
  arrows: (
    <>
      <path d="M4 1.500l3 3-3 3-3-3zM12 9l3 3-3 3-3-3z" fill="#4a4a4a" />
      <path d="M3 9.500l2 2M8 8l5-5" stroke="#4a4a4a" strokeWidth="1.500" />
    </>
  ),
  search: (
    <>
      <circle cx="9.500" cy="6" r="4.300" fill="#e9f2fc" stroke="#2f6fc4" strokeWidth="1.600" />
      <path d="M6.500 9.500L1.500 15" stroke="#2f6fc4" strokeWidth="2.200" />
    </>
  ),
  bubble: <path d="M2 4h9c3 0 4 2 4 4.500S13 13 9 13l-1 3-2-3C2 13 0 11 0 8.500 0 6 0 4 2 4z" fill="#e2e2e2" stroke="#aaa" />,
  mdi: (
    <>
      <path d="M1 1h9v8H1z" fill="#fff" stroke="#5b9bd5" />
      <path d="M1 2.500h9M4 5.500h11" stroke="#5b9bd5" />
      <path d="M4.500 4.500h11v10h-11z" fill="#fff" stroke="#4a86c8" />
      <path d="M5 6h10M6 11l2-3 2 4 2-4 2 3" stroke="#4a86c8" />
    </>
  ),
};

const Tool = ({ name, label, text, ...rest }) => (
  <ToolButton type="button" aria-label={label} title={label} {...rest}>
    {name && <Icon>{icons[name]}</Icon>}
    {text}
  </ToolButton>
);

const Coin = () => (
  <svg width="14" height="14" viewBox="0 0 14 14" aria-hidden="true">
    <circle cx="7" cy="7" r="6" fill="#b9a56a" stroke="#7d7d7d" strokeWidth="1.500" />
    <circle cx="7" cy="7" r="4.300" fill="#ffe600" stroke="#a58a1a" />
    <path d="M7 4v4M7 9v1.500" stroke="#5c4a00" strokeWidth="1.400" />
  </svg>
);

/* ---------- chart drawings ---------- */

const Guides = () =>
  GUIDES.map((i) => (
    <line key={i} x1={i * STEP + 0.5} x2={i * STEP + 0.5} y1="0" y2="100%" stroke="#000" strokeDasharray="3 3" />
  ));

const Range = ({ x, width, y }) => (
  <line x1={x} x2={x + width} y1={y} y2={y} stroke="#ffa07a" strokeDasharray="18 6" />
);

const PriceDrawing = () => (
  <Canvas>
    <path d="M1360 0h10l-5 5z" fill="#dfe5f1" />
    {[472, 538].map((y) => (
      <Range key={y} x={0} width={36} y={y - 74.5} />
    ))}
    {SESSIONS.map(([i, high, low]) => (
      <g key={i}>
        <Range x={i * STEP} width={64} y={high - 74.5} />
        <Range x={i * STEP} width={64} y={low - 74.5} />
      </g>
    ))}
    {CANDLES.map((c, i) => (
      <g key={i}>
        <rect x={i * STEP} y={c.high} width="1" height={c.low - c.high} fill="#c5c8e4" />
        <rect
          x={i * STEP - 1}
          y={c.open}
          width="3"
          height={Math.max(1, c.close - c.open)}
          fill={c.dir === "u" ? "#7b8bcd" : "#db749f"}
        />
      </g>
    ))}
    <Guides />
    <g stroke="#000">
      <rect x="668.500" y="360.500" width="20" height="115" fill="none" />
      <rect x="664.500" y="391.500" width="476" height="58" fill="none" />
      <rect x="1044.500" y="186.500" width="32" height="236" fill="none" />
    </g>
  </Canvas>
);

const ClimaxDrawing = () => (
  <Canvas>
    {CLIMAX.map(([i, tone, h]) => (
      <rect key={i} x={i * STEP - 1} y={101 - h} width="3" height={h} fill={tone === "r" ? "#f00" : "#0f0"} />
    ))}
    <polyline transform="translate(-5 -593)" points={AVERAGE} fill="none" stroke="#800000" />
    <Guides />
  </Canvas>
);

const BASE_ALERT = 130;
const LEVEL = 50;
const AlertDrawing = () => (
  <Canvas>
    {VOLUMES.map(({ size }, i) =>
      size === 0 ? null : (
        <g key={i}>
          <rect
            x={i * STEP - 1}
            y={BASE_ALERT - Math.min(Math.max(size, 0), LEVEL)}
            width="3"
            height={size < 0 ? 1 : Math.min(size, LEVEL)}
            fill="#483d8b"
          />
          {size > LEVEL && (
            <rect x={i * STEP - 1} y={BASE_ALERT - size} width="3" height={size - LEVEL} fill="#a52a2a" />
          )}
        </g>
      )
    )}
    <line x1="0" x2="100%" y1="80.500" y2="80.500" stroke="#90ee90" strokeDasharray="4 2" />
    <Guides />
  </Canvas>
);

const BASE_TONE = 137;
const ToneDrawing = () => (
  <Canvas>
    {VOLUMES.map(({ size, tone }, i) => {
      if (size === 0) return null;
      const h = size === 1 ? 2 : Math.round(size * 1.105);
      return (
        <rect
          key={i}
          x={i * STEP - 1}
          y={BASE_TONE - Math.max(h, 0)}
          width="3"
          height={Math.max(h, 1)}
          fill={TONES[tone]}
        />
      );
    })}
    <Guides />
  </Canvas>
);

/* ---------- content ---------- */

const MENUS = ["Archivo", "Ver", "Insertar", "Gráficos", "Herramientas", "Ventana", "Ayuda"];
const FRAMES = ["M1", "M5", "M15", "M30", "H1", "H4", "D1", "W1", "MN"];
const PRICES = Array.from({ length: 16 }, (_, i) => (87.945 - i * 0.095).toFixed(3));
const DAYS = ["24 Aug", "25 Aug", "26 Aug", "27 Aug", "30 Aug", "31 Aug", "1 Sep", "2 Sep", "3 Sep", "6 Sep"];
const TIMES = DAYS.flatMap((d) => ["03:30", "11:30", "19:30"].map((t) => `${d} ${t}`));
TIMES[0] = "24 Aug 2021";
// Labels that fall wholly behind the cursor tags stay blank.
const COVERED = ["27 Aug 11:30", "31 Aug 11:30"];
const SYMBOLS = [
  "GBPNZD.pro,Daily", "EURAUD.pro,Daily", "GBPJPY.pro,Daily", "AUDCAD.pro,Daily", "EURCAD.pro,Daily",
  "USDJPY.pro,Daily", "EURUSD.pro,Daily", "GBPUSD.pro,H4", "NZDJPY.pro,Daily", "EURJPY.pro,H1",
  "CADJPY.pro,M30", "USDCAD.pro,H4", "GBPCAD.pro,H4", "EURGBP.pro,H4", "AUDUSD.pro,M30", "NZDUSD.pro,M30",
];
const DRAW_TOOLS = [
  ["vline", "Línea vertical"], ["hline", "Línea horizontal"], ["trend", "Línea de tendencia"],
  ["channel", "Canal equidistante"], ["fibo", "Retroceso de Fibonacci"],
];
const SHAPE_TOOLS = [
  ["rect", "Rectángulo"], ["fiboTime", "Expansión de Fibonacci"], ["fork", "Abanico de Fibonacci"], ["ellipse", "Elipse"],
];

const LetterTool = styled(ToolButton)`
  font: bold 12px/16px ${SMALL};
  color: #666;
`;

export default function App() {
  return (
    <Window>
      <GlobalStyle />
      <TitleBar>
        <Brand>axi</Brand>
        <Title>4250692: Axi-US09-Live - [CADJPY.pro,M30]</Title>
        <WindowButton type="button" aria-label="Minimizar">
          <svg width="10" height="10"><path d="M0 5.500h10" stroke="#000" /></svg>
        </WindowButton>
        <WindowButton type="button" aria-label="Restaurar">
          <svg width="10" height="10" fill="none" stroke="#000"><path d="M.5 2.500h7v7h-7zM2.500 2.500v-2h7v7h-2" /></svg>
        </WindowButton>
        <WindowButton type="button" aria-label="Cerrar">
          <svg width="10" height="10" stroke="#000"><path d="M0 0l10 10M10 0L0 10" /></svg>
        </WindowButton>
      </TitleBar>

      <MenuBar>
        <Icon>{icons.mdi}</Icon>
        <MenuItems>
          {MENUS.map((m) => (
            <MenuButton type="button" key={m}>{m}</MenuButton>
          ))}
        </MenuItems>
        <MdiButton type="button" aria-label="Minimizar gráfico">
          <svg width="8" height="8"><path d="M1 6.500h6" stroke="currentColor" strokeWidth="2" /></svg>
        </MdiButton>
        <MdiButton type="button" aria-label="Restaurar gráfico">
          <svg width="9" height="9" fill="none" stroke="currentColor"><path d="M.5 3.500h5v4h-5zM.5 4.500h5M2.500 3V.5h6v5H6M2.500 1.500h6" /></svg>
        </MdiButton>
        <MdiButton type="button" aria-label="Cerrar gráfico">
          <svg width="8" height="8" stroke="currentColor" strokeWidth="2"><path d="M1 1l6 6M7 1L1 7" /></svg>
        </MdiButton>
      </MenuBar>

      <Toolbar>
        <Group>
          <Handle />
          <Tool name="newChart" label="Nuevo gráfico" $drop />
          <Tool name="profiles" label="Perfiles" $drop />
          <Divider />
          <Tool name="market" label="Observación del mercado" />
          <Tool name="cross" label="Ventana de datos" />
          <Tool name="navigator" label="Navegador" />
          <Tool name="terminal" label="Terminal" />
          <Tool name="tester" label="Probador de estrategias" />
          <Divider />
          <Tool name="order" text="Nueva orden" $wide />
          <Tool name="book" label="MetaEditor" />
          <Tool name="cloud" label="Hosting virtual" />
          <Tool name="signal" label="Señales" />
          <Tool name="auto" text="AutoTrading" $wide />
        </Group>
        <Group>
          <Handle />
          <Tool name="bars" label="Barras" />
          <Tool name="candles" label="Velas" $pressed />
          <Tool name="line" label="Línea" />
          <Divider $tight />
          <Tool name="zoomIn" label="Acercar" />
          <Tool name="zoomOut" label="Alejar" />
          <Tool name="tile" label="Mosaico" />
          <Divider />
          <Tool name="scroll" label="Desplazamiento automático" />
          <Tool name="shift" label="Desplazar gráfico" $pressed />
          <Divider $tight />
          <Tool name="indicators" label="Indicadores" $drop />
          <Tool name="clock" label="Períodos" $drop />
          <Tool name="template" label="Plantillas" $drop />
        </Group>
        <Group>
          <Handle />
          <Tool name="cursor" label="Cursor" $pressed />
          <Tool name="plusThin" label="Cruz" />
          <Divider />
          {DRAW_TOOLS.map(([name, label]) => (
            <Tool key={name} name={name} label={label} />
          ))}
          <LetterTool type="button" aria-label="Texto">A</LetterTool>
          {SHAPE_TOOLS.map(([name, label]) => (
            <Tool key={name} name={name} label={label} />
          ))}
          <Tool name="arrows" label="Flechas" $drop />
        </Group>
        <Group>
          <Handle />
          {FRAMES.map((f) => (
            <Tool key={f} text={f} $small $pressed={f === "M30"} />
          ))}
        </Group>
        <Spacer />
        <Tool name="search" label="Buscar" />
        <Alerts type="button" aria-label="Mensajes">
          <Icon>{icons.bubble}</Icon>
          <AlertCount>1</AlertCount>
        </Alerts>
      </Toolbar>

      <ChartFrame>
        <Pane>
          <Plot>
            <PriceDrawing />
            <Caption>
              <svg width="7" height="4"><path d="M0 0h7L3.500 4z" fill={INK} /></svg>
              CADJPY.pro,M30
            </Caption>
            <Site href="#site">whitetigertools.com</Site>
            <Switches>
              <Switch type="button" $tone="#00f">T</Switch>
              <Switch type="button" $tone="#008000">S</Switch>
              <Switch type="button" $tone="#f00">R</Switch>
            </Switches>
          </Plot>
          <PriceAxis>
            {PRICES.map((p) => (
              <Price key={p}>{p}</Price>
            ))}
          </PriceAxis>
        </Pane>
        <Pane $height={108}>
          <Plot>
            <ClimaxDrawing />
            <Caption>Better Volume 1.5 0.0000 1195.0000 0.0000 0.0000 0.0000 0.0000 2303.0000</Caption>
          </Plot>
          <Axis>
            <span>12697.65</span>
            <Overlap>
              <span>0.00</span>
              <span>-604.65</span>
            </Overlap>
          </Axis>
        </Pane>
        <Pane $height={133}>
          <Plot>
            <AlertDrawing />
            <Source $width={360}>
              <Coin />
              {"#Volumes w/ Alert [ Source: #6C USD/CAD ]"}
            </Source>
          </Plot>
          <Axis>
            <span>16540</span>
            <LevelTag>6442</LevelTag>
            <span>0</span>
          </Axis>
        </Pane>
        <Pane $height={140}>
          <Plot>
            <ToneDrawing />
            <Source $width={341}>
              <Coin />
              {"#Volumes Colored [ Source: #6C USD/CAD ]  [ PINK BARS: 2 ]"}
            </Source>
          </Plot>
          <Axis>
            <span>15788</span>
            <span>0</span>
          </Axis>
        </Pane>
        <TimeAxis>
          {TIMES.map((t) => (
            <Time key={t}>{COVERED.includes(t) ? "" : t}</Time>
          ))}
          <TimeTag $index={167} $next={172}>202</TimeTag>
          <TimeTag $index={172}>2021.08.27 17:30</TimeTag>
          <TimeTag $index={261} $next={269}>2021.0</TimeTag>
          <TimeTag $index={269}>2021.08.31 18:00</TimeTag>
        </TimeAxis>
      </ChartFrame>

      <Tabs>
        {SYMBOLS.map((s) => (
          <Tab type="button" key={s} $active={s === "CADJPY.pro,M30"}>{s}</Tab>
        ))}
        <Spacer />
        <TabScroll type="button" aria-label="Anterior">◀</TabScroll>
        <TabScroll type="button" aria-label="Siguiente">▶</TabScroll>
      </Tabs>

      <StatusBar>
        <Cell>Para obtener ayuda, pulse F1</Cell>
        <Cell $width={117}>ICT</Cell>
        <Cell $width={102}>2021.08.30 19:00</Cell>
        <Cell $width={70}>O: 87.178</Cell>
        <Cell $width={70}>H: 87.186</Cell>
        <Cell $width={70}>L: 87.129</Cell>
        <Cell $width={70}>C: 87.160</Cell>
        <Cell $width={70}>V: 806</Cell>
        <Cell $width={129}>
          <svg width="23" height="13" aria-hidden="true">
            {[0, 1, 2, 3, 4, 5, 6, 7].map((i) => (
              <g key={i}>
                <rect x={i * 3} y="0" width="2" height={11 - i} fill="#6b8e23" />
                <rect x={i * 3} y={11 - i} width="2" height={2 + i} fill="#17506b" />
              </g>
            ))}
          </svg>
          298049/91 kb
        </Cell>
      </StatusBar>
    </Window>
  );
}
